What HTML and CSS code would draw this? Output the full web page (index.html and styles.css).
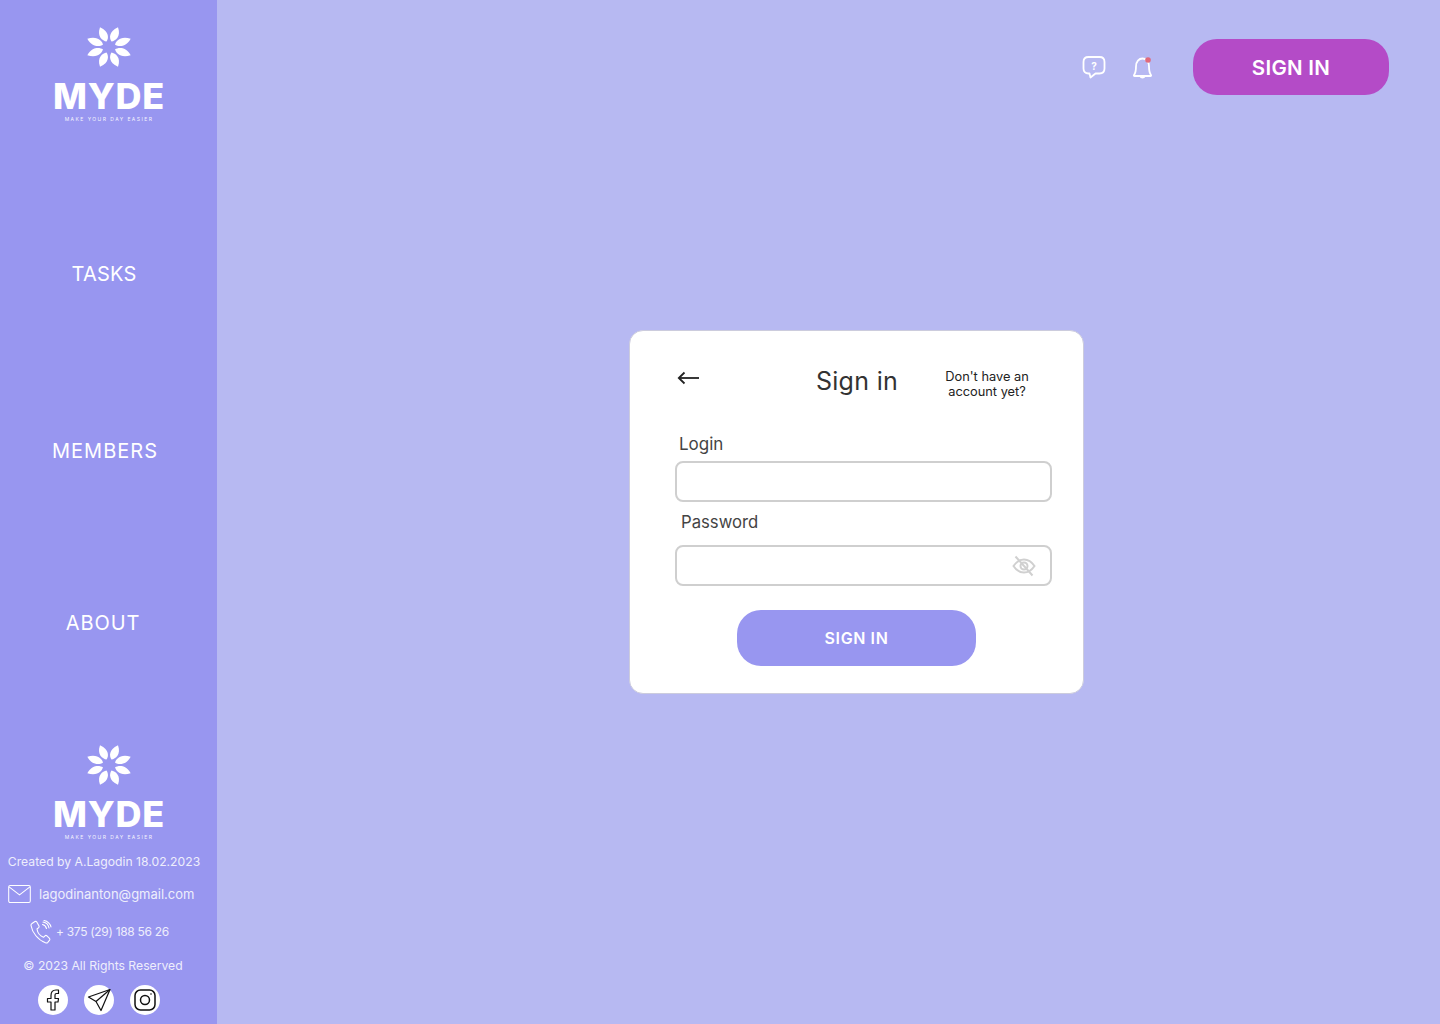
FILE: index.html
```html
<!DOCTYPE html>
<html lang="en">
<head>
    <meta charset="UTF-8">
    <meta name="viewport" content="width=device-width, initial-scale=1.0">
    <title>Myde - Sign in</title>
    <link rel="stylesheet" href="styles.css">
</head>
<body>
    <svg class="defs" width="0" height="0">
        <symbol id="flower" viewBox="-22 -22 44 44" preserveAspectRatio="none">
            <g fill="#fff">
                <path id="petal" d="M0 -6C-3 -8 -6.500 -14 0 -21.500C6.500 -14 3 -8 0 -6Z" transform="rotate(22.5)"/>
                <use href="#petal" transform="rotate(45)"/>
                <use href="#petal" transform="rotate(90)"/>
                <use href="#petal" transform="rotate(135)"/>
                <use href="#petal" transform="rotate(180)"/>
                <use href="#petal" transform="rotate(225)"/>
                <use href="#petal" transform="rotate(270)"/>
                <use href="#petal" transform="rotate(315)"/>
            </g>
        </symbol>
    </svg>

    <aside class="sidebar">
        <div class="logo">
            <svg class="logo-mark" width="48" height="44"><use href="#flower"/></svg>
            <div class="logo-name">MYDE</div>
            <div class="logo-tag">MAKE YOUR DAY EASIER</div>
        </div>

        <nav class="side-nav">
            <a class="nav-tasks" href="#tasks">TASKS</a>
            <a class="nav-members" href="#members">MEMBERS</a>
            <a class="nav-about" href="#about">ABOUT</a>
        </nav>

        <footer class="side-footer">
            <div class="logo">
                <svg class="logo-mark" width="48" height="44"><use href="#flower"/></svg>
                <div class="logo-name">MYDE</div>
                <div class="logo-tag">MAKE YOUR DAY EASIER</div>
            </div>
            <p class="created">Created by A.Lagodin 18.02.2023</p>
            <div class="contact contact-mail">
                <svg width="23" height="18" viewBox="0 0 24 19" fill="none" stroke="#fff" stroke-width="1.1" stroke-linejoin="round">
                    <rect x="0.6" y="0.6" width="22.8" height="17.8" rx="1.5"/>
                    <path d="M1 2L12 10.500L23 2"/>
                </svg>
                <span>lagodinanton@gmail.com</span>
            </div>
            <div class="contact contact-phone">
                <svg width="22" height="24" viewBox="0 0 22 24" fill="none" stroke="#fff" stroke-width="1.1" stroke-linecap="round" stroke-linejoin="round">
                    <path d="M2 3.500L5 1.500C5.800 1.100 6.400 1.400 6.800 2L9 6C9.300 6.700 9.200 7.200 8.700 7.600L7 9C7.500 12.500 10.500 16 13.500 17.300L15 15.800C15.600 15.300 16.200 15.300 16.700 15.700L19.500 18.300C20 18.900 20 19.500 19.600 20.100L17.800 22.300C17.200 23 16.400 23.100 15.500 22.800C8 20 2.200 12.500 1 5.500C0.900 4.600 1.300 3.900 2 3.500Z"/>
                    <path d="M12.500 4.500C14.500 5 16 6.500 16.500 8.500"/>
                    <path d="M13 2C16 2.500 18.500 5 19 8"/>
                    <path d="M14 0.500C17.500 1 20.500 4 21 7"/>
                </svg>
                <span>+ 375 (29) 188 56 26</span>
            </div>
            <p class="rights">© 2023 All Rights Reserved</p>
            <div class="socials">
                <a class="social" href="#facebook">
                    <svg width="20" height="22" viewBox="0 0 20 22" fill="none" stroke="#111" stroke-width="1.200" stroke-linejoin="round">
                        <path d="M8 21V13H4.500V9.500H8V6.500C8 3 10 1 13 1H15.500V4.500H13.500C12.500 4.500 12 5 12 6V9.500H15.500L15 13H12V21Z"/>
                    </svg>
                </a>
                <a class="social" href="#telegram">
                    <svg width="24" height="24" viewBox="0 0 24 24" fill="none" stroke="#111" stroke-width="1.200" stroke-linejoin="round">
                        <path d="M23 1.500L1.500 9L9 13.500L14 22.500Z"/>
                        <path d="M23 1.500L9 13.500"/>
                    </svg>
                </a>
                <a class="social" href="#instagram">
                    <svg width="22" height="22" viewBox="0 0 22 22" fill="none" stroke="#111" stroke-width="1.500">
                        <rect x="1" y="1" width="20" height="20" rx="5.500"/>
                        <circle cx="11" cy="11" r="4.500"/>
                        <circle cx="17" cy="5" r="0.800" fill="#111" stroke="none"/>
                    </svg>
                </a>
            </div>
        </footer>
    </aside>

    <main class="main">
        <header class="topbar">
            <svg class="top-help" width="24" height="24" viewBox="0 0 24 24" fill="none" stroke="#fff" stroke-width="1.800" stroke-linejoin="round">
                <path d="M6.500 2H17.500C20.800 2 22.500 3.800 22.500 7V13.500C22.500 16.700 20.800 18.500 17.500 18.500H13.500L8.500 22.500L7.500 18.500H6.500C3.200 18.500 1.500 16.700 1.500 13.500V7C1.500 3.800 3.200 2 6.500 2Z"/>
                <text class="help-mark" x="12" y="14.500" text-anchor="middle">?</text>
            </svg>
            <svg class="top-bell" width="24" height="26" viewBox="0 0 24 26" fill="none" stroke="#fff" stroke-width="1.800" stroke-linejoin="round">
                <path d="M3 20C5 17.500 5 15 5 11.500C5 6.500 8 3.500 11.500 3.500C15 3.500 18 6.500 18 11.500C18 15 18 17.500 20 20C20.300 20.700 20 21 19.500 21H3.500C3 21 2.700 20.700 3 20Z"/>
                <path d="M9.500 21.500C10 23 13 23 13.500 21.500"/>
                <circle cx="17" cy="5" r="2.800" fill="#e06a7c" stroke="none"/>
            </svg>
            <button class="top-signin" type="button">SIGN IN</button>
        </header>

        <section class="card">
            <div class="card-head">
                <svg class="back" width="22" height="14" viewBox="0 0 22 14" fill="none" stroke="#222" stroke-width="1.800">
                    <path d="M22 7H2"/>
                    <path d="M7.500 1.500L1.800 7L7.500 12.500"/>
                </svg>
                <h2>Sign in</h2>
                <a class="no-account" href="#signup">Don't have an account yet?</a>
            </div>
            <form class="form">
                <label class="label-login" for="login">Login</label>
                <input class="field" type="text" id="login">
                <label class="label-password" for="password">Password</label>
                <div class="password-wrap">
                    <input class="field" type="password" id="password">
                    <svg class="eye" width="24" height="22" viewBox="0 0 24 22" fill="none" stroke="#d0d0d0" stroke-width="2">
                        <path d="M1.500 11C4.500 6.500 8 4.500 12 4.500C16 4.500 19.500 6.500 22.500 11C19.500 15.500 16 17.500 12 17.500C8 17.500 4.500 15.500 1.500 11Z"/>
                        <circle cx="12" cy="11" r="3.500"/>
                        <path d="M3.500 1.500L20.500 20.500"/>
                    </svg>
                </div>
                <button class="submit" type="button">SIGN IN</button>
            </form>
        </section>
    </main>
</body>
</html>
```

FILE: styles.css
```css
* { box-sizing: border-box; }
body { margin: 0; height: 1024px; display: flex; overflow: hidden; font-family: Inter, "Open Sans", sans-serif; background-color: #b7b9f2; color: #333; }
a { color: inherit; text-decoration: none; }
p { margin: 0; }
.defs { display: block; flex: none; }

/* sidebar */
.sidebar { flex: none; width: 217px; height: 1024px; display: flex; flex-direction: column; background-color: #9896f0; color: #fff; }
.logo { display: flex; flex-direction: column; align-items: center; padding-left: 1px; color: #fff; }
.logo-mark { display: block; }
.logo-name { margin-top: 6px; font-size: 36px; line-height: 42px; font-weight: 800; letter-spacing: 0.7px; }
.logo-tag { margin-top: -1px; font-size: 5px; line-height: 7px; letter-spacing: 1.45px; opacity: 0.9; }
.sidebar > .logo { padding-top: 25px; }

.side-nav { display: flex; flex-direction: column; align-items: center; font-size: 20px; line-height: 24px; }
.nav-tasks { margin-top: 139px; margin-right: 9px; letter-spacing: 0.2px; }
.nav-members { margin-top: 153px; margin-right: 7px; letter-spacing: 1px; }
.nav-about { margin-top: 148px; margin-right: 11px; letter-spacing: 0.9px; }

.side-footer { margin-top: auto; padding-bottom: 9px; display: flex; flex-direction: column; font-size: 12.200px; line-height: 16px; color: #eeeefc; }
.created { margin-top: 13px; margin-right: 9px; text-align: center; }
.contact { display: flex; align-items: center; }
.contact-mail { margin-top: 15px; padding-left: 8px; gap: 8px; font-size: 13px; }
.contact-phone { margin-top: 17px; padding-left: 30px; gap: 4px; font-size: 12px; letter-spacing: -0.3px; }
.rights { margin-top: 14px; margin-right: 11px; text-align: center; }
.socials { margin-top: 11px; padding-left: 38px; display: flex; gap: 16px; }
.social { width: 30px; height: 30px; border-radius: 50%; background-color: #fff; display: flex; align-items: center; justify-content: center; }

/* top bar */
.main { flex: 1; padding: 39px 51px 0 412px; }
.topbar { display: flex; align-items: center; justify-content: flex-end; height: 56px; }
.top-help { margin-right: 25px; }
.help-mark { font-size: 10px; font-weight: 700; fill: #fff; stroke: none; }
.top-bell { margin: 2px 38px 0 0; }
.top-signin { width: 196px; height: 56px; border: none; border-radius: 24px; background-color: #b44bc7; color: #fff; font-family: inherit; font-size: 20.500px; font-weight: 600; letter-spacing: 0.3px; cursor: pointer; }

/* card */
.card { width: 455px; height: 364px; margin-top: 235px; padding: 0 31px 0 45px; background-color: #fff; border: 1px solid #ccccdd; border-radius: 14px; }
.card-head { display: grid; grid-template-columns: 112px 140px 120px; align-items: start; }
.back { margin: 40px 0 0 2px; }
.card-head h2 { margin: 35px 0 0; font-size: 25px; line-height: 30px; font-weight: 400; text-align: center; color: #333; letter-spacing: 0.3px; }
.no-account { margin-top: 38px; font-size: 12.800px; line-height: 15px; text-align: center; color: #222; }

.form { display: flex; flex-direction: column; }
.form label { font-size: 17px; line-height: 20px; color: #444; }
.label-login { margin-top: 35px; margin-bottom: 7px; padding-left: 4px; }
.form .label-password { margin-top: 10px; margin-bottom: 13px; padding-left: 6px; font-size: 16.700px; }
.field { display: block; width: 377px; height: 41px; padding: 0 10px; border: 2px solid #cfcfcf; border-radius: 8px; background-color: #fff; outline: none; }
.password-wrap { position: relative; width: 377px; }
.eye { position: absolute; right: 16px; top: 10px; }
.submit { align-self: flex-start; width: 239px; height: 56px; margin: 24px 0 0 62px; border: none; border-radius: 24px; background-color: #9896f0; color: #fff; font-family: inherit; font-size: 16px; font-weight: 600; letter-spacing: 0.6px; cursor: pointer; }
```
